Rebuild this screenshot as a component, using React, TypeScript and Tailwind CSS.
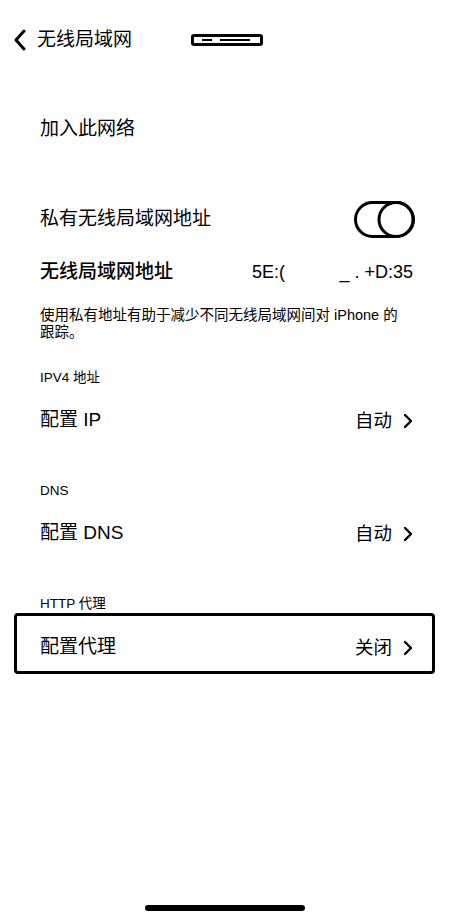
import React from "react";

const font = { fontFamily: '"Liberation Sans", "Noto Sans CJK SC", sans-serif' };

function Chevron() {
  return (
    <svg width="10" height="16" viewBox="0 0 10 16" className="ml-[11px]">
      <polyline points="2,2 8,8 2,14" fill="none" stroke="black" strokeWidth="2.4" strokeLinecap="round" strokeLinejoin="round" />
    </svg>
  );
}

function Row({ label, value }: { label: string; value: string }) {
  return (
    <div className="flex h-[66px] items-center justify-between pl-[40px] pr-[36px] pt-[3px]">
      <span className="text-[19px] text-black">{label}</span>
      <span className="flex items-center text-[18.5px] text-black">
        {value}
        <Chevron />
      </span>
    </div>
  );
}

function SectionTitle({ children, mt }: { children: React.ReactNode; mt: string }) {
  return <div className={`${mt} pl-[40px] text-[13.5px] leading-[16px] text-black`}>{children}</div>;
}

export default function App() {
  return (
    <div className="flex h-[919px] w-[449px] flex-col overflow-hidden bg-white text-black" style={font}>
      {/* nav */}
      <div className="flex h-[78px] items-center pl-[13px] pt-[2px]">
        <svg width="14" height="22" viewBox="0 0 14 22">
          <polyline points="11,2 3,11 11,20" fill="none" stroke="black" strokeWidth="3" strokeLinecap="round" strokeLinejoin="round" />
        </svg>
        <span className="ml-[10px] text-[19px]">无线局域网</span>
        <div className="ml-[59px] flex h-[12px] w-[72px] items-center rounded-[3px] border-[3px] border-black">
          <div className="ml-[8px] h-[2px] w-[10px] bg-black" />
          <div className="ml-[8px] h-[2px] w-[30px] bg-black" />
        </div>
      </div>

      <div className="flex h-[100px] items-center pl-[40px] pt-[3px] text-[19px]">加入此网络</div>

      <div className="flex h-[80px] items-center justify-between pl-[40px] pr-[34px] pt-[3px]">
        <span className="text-[19px]">私有无线局域网地址</span>
        <svg width="61" height="37" viewBox="0 0 61 37">
          <rect x="1.5" y="1.5" width="58" height="34" rx="17" fill="white" stroke="black" strokeWidth="3" />
          <circle cx="42" cy="18.5" r="17" fill="white" stroke="black" strokeWidth="3" />
        </svg>
      </div>

      <div className="flex h-[26px] items-center pl-[40px] pr-[36px] pt-[2px]">
        <span className="w-[212px] text-[19px] font-medium">无线局域网地址</span>
        <div className="flex flex-1 items-center justify-between text-[18px]">
          <span>5E:(</span>
          <span>_ .&nbsp;+D:35</span>
        </div>
      </div>

      <p className="mt-[23px] pl-[40px] pr-[30px] text-[14.5px] leading-[17px]">
        使用私有地址有助于减少不同无线局域网间对 iPhone 的
        <br />
        跟踪。
      </p>

      <SectionTitle mt="mt-[29px]">IPV4 地址</SectionTitle>
      <Row label="配置 IP" value="自动" />

      <SectionTitle mt="mt-[31px]">DNS</SectionTitle>
      <Row label="配置 DNS" value="自动" />

      <SectionTitle mt="mt-[31px]">HTTP 代理</SectionTitle>
      <div className="mx-[14px] mt-[1px] flex h-[61px] items-center justify-between rounded-[4px] border-[3px] border-black pl-[23px] pr-[19px] pt-[8px]">
        <span className="text-[19px]">配置代理</span>
        <span className="flex items-center text-[18.5px]">
          关闭
          <Chevron />
        </span>
      </div>

      <div className="flex-1" />
      <div className="mx-auto mb-[8px] h-[6px] w-[160px] rounded-full bg-black" />
    </div>
  );
}
